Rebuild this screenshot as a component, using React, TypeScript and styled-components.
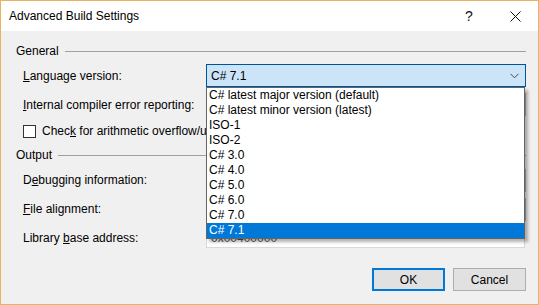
import React from "react";
import styled, { createGlobalStyle } from "styled-components";

const Global = createGlobalStyle`
  html, body { margin: 0; padding: 0; background: #f0f0f0; }
  body { font-family: "Liberation Sans", Arial, sans-serif; font-size: 12px; color: #000; }
  * { box-sizing: border-box; }
`;

const Window = styled.div`
  width: 539px;
  height: 305px;
  border: 1px solid #e6b35e;
  background: #f0f0f0;
  display: flex;
  flex-direction: column;
`;

const TitleBar = styled.div`
  height: 30px;
  background: #fff;
  display: flex;
  align-items: center;
  padding-left: 8px;
`;

const Title = styled.div`
  flex: 1;
  font-size: 12px;
`;

const TitleButton = styled.div<{ $w: number }>`
  width: ${(p) => p.$w}px;
  height: 30px;
  display: flex;
  align-items: center;
  justify-content: center;
  font-size: 14px;
  color: #111;
`;

const Body = styled.div`
  flex: 1;
  display: flex;
  flex-direction: column;
  padding: 9px 12px 0 15px;
`;

const GroupHeader = styled.div<{ $h: number }>`
  height: ${(p) => p.$h}px;
  display: flex;
  align-items: center;
  gap: 6px;
`;

const Rule = styled.div`
  flex: 1;
  height: 1px;
  background: #a0a0a0;
`;

const Row = styled.div<{ $h: number }>`
  height: ${(p) => p.$h}px;
  display: grid;
  grid-template-columns: 183px 320px;
  align-items: center;
  padding-left: 7px;
`;

const Label = styled.div`
  white-space: nowrap;
`;

const CheckRow = styled.div<{ $h: number }>`
  height: ${(p) => p.$h}px;
  width: 191px;
  display: flex;
  align-items: center;
  gap: 6px;
  padding-left: 7px;
  white-space: nowrap;
  overflow: hidden;
`;

const Box = styled.div`
  flex: none;
  width: 13px;
  height: 13px;
  border: 1px solid #333;
  background: #fff;
`;

const ComboWrap = styled.div`
  position: relative;
  width: 320px;
`;

const Combo = styled.div<{ $focus?: boolean }>`
  height: 23px;
  border: 1px solid ${(p) => (p.$focus ? "#005499" : "#acacac")};
  background: ${(p) => (p.$focus ? "#cce4f7" : "#e5e5e5")};
  display: flex;
  align-items: center;
  padding-left: 4px;
  padding-right: 6px;
`;

const ComboText = styled.div`
  flex: 1;
`;

const TextBox = styled.div`
  height: 20px;
  width: 319px;
  border: 1px solid #d9d9d9;
  background: #fff;
  display: flex;
  align-items: center;
  padding-left: 4px;
  color: #555;
`;

const List = styled.div`
  position: absolute;
  top: 23px;
  left: 0;
  width: 319px;
  border: 1px solid #646464;
  background: #fff;
  box-shadow: 3px 3px 3px rgba(0, 0, 0, 0.3);
  z-index: 10;
`;

const Item = styled.div<{ $sel?: boolean }>`
  height: 15px;
  line-height: 15px;
  padding-left: 2px;
  background: ${(p) => (p.$sel ? "#0078d7" : "transparent")};
  color: ${(p) => (p.$sel ? "#fff" : "#000")};
  white-space: nowrap;
`;

const Buttons = styled.div`
  margin-top: 18px;
  display: flex;
  justify-content: flex-end;
  gap: 8px;
`;

const Button = styled.div<{ $default?: boolean }>`
  width: 73px;
  height: 23px;
  background: #e1e1e1;
  border: ${(p) => (p.$default ? "2px solid #0078d7" : "1px solid #adadad")};
  display: flex;
  align-items: center;
  justify-content: center;
`;

const U = styled.span`
  text-decoration: underline;
  text-underline-offset: 1px;
`;

const items = [
  "C# latest major version (default)",
  "C# latest minor version (latest)",
  "ISO-1",
  "ISO-2",
  "C# 3.0",
  "C# 4.0",
  "C# 5.0",
  "C# 6.0",
  "C# 7.0",
  "C# 7.1",
];

const Chevron = () => (
  <svg width="9" height="6" viewBox="0 0 9 6">
    <path d="M0.5 0.8 L4.5 4.8 L8.5 0.8" fill="none" stroke="#444" strokeWidth="1" />
  </svg>
);

export default function App() {
  return (
    <>
      <Global />
      <Window>
        <TitleBar>
          <Title>Advanced Build Settings</Title>
          <TitleButton $w={46}>?</TitleButton>
          <TitleButton $w={46}>
            <svg width="11" height="11" viewBox="0 0 11 11">
              <path d="M0.5 0.5 L10.5 10.5 M10.5 0.5 L0.5 10.5" stroke="#111" strokeWidth="1" />
            </svg>
          </TitleButton>
        </TitleBar>
        <Body>
          <GroupHeader $h={22}>
            General
            <Rule />
          </GroupHeader>
          <Row $h={27}>
            <Label>
              <U>L</U>anguage version:
            </Label>
            <ComboWrap>
              <Combo $focus>
                <ComboText>C# 7.1</ComboText>
                <Chevron />
              </Combo>
              <List>
                {items.map((t, i) => (
                  <Item key={t} $sel={i === items.length - 1}>
                    {t}
                  </Item>
                ))}
              </List>
            </ComboWrap>
          </Row>
          <Row $h={31}>
            <Label>
              <U>I</U>nternal compiler error reporting:
            </Label>
            <ComboWrap>
              <Combo>
                <ComboText />
                <Chevron />
              </Combo>
            </ComboWrap>
          </Row>
          <CheckRow $h={22}>
            <Box />
            <span>
              Chec<U>k</U> for arithmetic overflow/underflow
            </span>
          </CheckRow>
          <GroupHeader $h={26}>
            Output
            <Rule />
          </GroupHeader>
          <Row $h={24}>
            <Label>
              D<U>e</U>bugging information:
            </Label>
            <ComboWrap>
              <Combo>
                <ComboText />
                <Chevron />
              </Combo>
            </ComboWrap>
          </Row>
          <Row $h={34}>
            <Label>
              <U>F</U>ile alignment:
            </Label>
            <ComboWrap>
              <Combo>
                <ComboText />
                <Chevron />
              </Combo>
            </ComboWrap>
          </Row>
          <Row $h={24}>
            <Label>
              Library <U>b</U>ase address:
            </Label>
            <TextBox>0x00400000</TextBox>
          </Row>
          <Buttons>
            <Button $default>OK</Button>
            <Button>Cancel</Button>
          </Buttons>
        </Body>
      </Window>
    </>
  );
}
